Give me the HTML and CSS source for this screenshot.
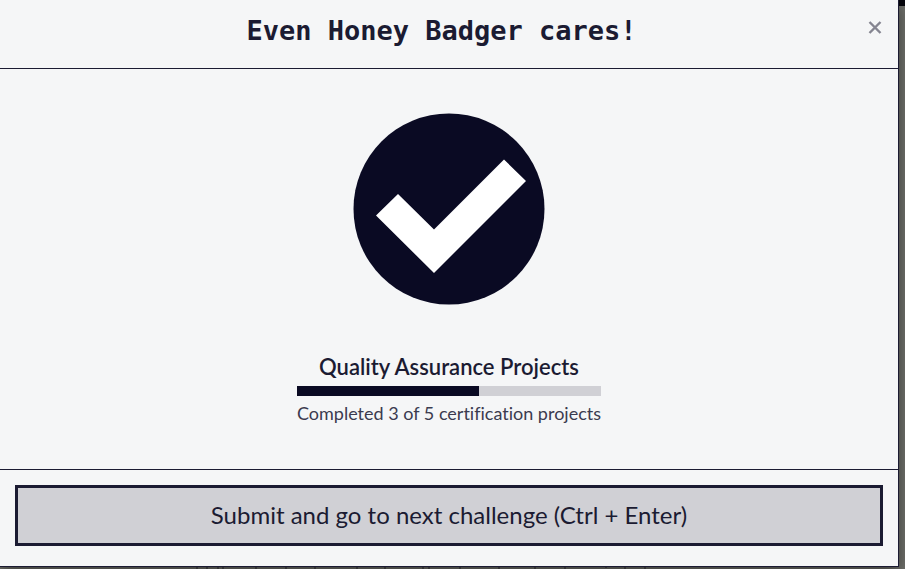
FILE: index.html
```html
<!DOCTYPE html>
<html lang="en">
<head>
<meta charset="utf-8">
<title>Even Honey Badger cares!</title>
<link rel="stylesheet" href="styles.css">
</head>
<body>
<div class="backdrop">
  <section class="modal" role="dialog" aria-labelledby="modal-title">
    <header class="modal-header">
      <h1 class="modal-title" id="modal-title">Even Honey Badger cares!</h1>
      <button class="close" type="button" aria-label="Close">
        <svg width="14" height="14" viewBox="0 0 14 14" aria-hidden="true"><path d="M1.500 1l11 11M12.500 1l-11 11" fill="none" stroke="#858591" stroke-width="2.400"/></svg>
      </button>
    </header>
    <main class="modal-body">
      <svg class="check" width="192" height="192" viewBox="0 0 192 192" aria-hidden="true">
        <circle cx="96" cy="96" r="95.500" fill="#0a0a23"/>
        <path d="M23 102.500L45 81l36 35.500L151 46.500L173 68L81 160z" fill="#fff"/>
      </svg>
      <div class="progress">
        <h2 class="progress-title">Quality Assurance Projects</h2>
        <div class="track" role="progressbar" aria-label="Certification progress" aria-valuemin="0" aria-valuemax="5" aria-valuenow="3"><div class="fill" style="width:60%"></div></div>
        <p class="progress-text">Completed 3 of 5 certification projects</p>
      </div>
    </main>
    <footer class="modal-footer">
      <button class="submit" type="button">Submit and go to next challenge (Ctrl + Enter)</button>
    </footer>
  </section>
  <svg class="behind" width="905" height="2" viewBox="0 0 905 2" aria-hidden="true">
    <path d="M197 0v2M207 0v2M218 0v2M223 0v2M256 0v2M286 0v2M315 0v2M357 0v2M385 0v2M423 0v2M429 0v2M460 0v2M499 0v2M535 0v2M565 0v2M606 0v1M625 0v2M645 0v2" stroke="#1c1c22" stroke-width="1"/>
  </svg>
</div>
</body>
</html>
```
FILE: styles.css
```css
* {
  box-sizing: border-box;
}

body {
  margin: 0;
  color: #1b1b32;
  font-family: Lato, sans-serif;
  overflow: hidden;
}

.backdrop {
  display: flex;
  flex-direction: column;
  height: 100vh;
  padding-right: 6px;
  background: linear-gradient(#05050c 6px, #71726d 6px);
}

.modal {
  flex: 1;
  display: flex;
  flex-direction: column;
  border: solid #1b1b32;
  border-width: 0 1px 1px 0;
  background: #f5f6f7;
  box-shadow: 0 5px 15px rgba(0, 0, 0, 0.5);
}

.modal-header {
  display: flex;
  align-items: flex-start;
  padding: 14px 16px 20px 15px;
  border-bottom: 1px solid #1b1b32;
}

.modal-title {
  flex: 1;
  margin: 0;
  font: bold 27px/34px "DejaVu Sans Mono", monospace;
  text-align: center;
}

.close {
  display: flex;
  margin: 0;
  padding: 7px 0;
  border: 0;
  background: none;
}

.modal-body {
  flex: 1;
  display: flex;
  flex-direction: column;
  align-items: center;
  padding-top: 44px;
}

.check {
  display: block;
}

.progress {
  margin-top: 48px;
  text-align: center;
}

.progress-title {
  margin: 0;
  font-size: 22px;
  font-weight: 600;
  line-height: 28px;
}

.track {
  height: 10px;
  margin-top: 5px;
  background: #d0d0d5;
}

.fill {
  height: 100%;
  background: #0a0a23;
}

.progress-text {
  margin: 5px 0 0;
  color: #3b3b4f;
  font-size: 18px;
  font-variant-ligatures: none;
  line-height: 24px;
}

.modal-footer {
  padding: 15px 15px 20px;
  border-top: 1px solid #1b1b32;
}

.submit {
  display: block;
  width: 100%;
  margin: 0;
  padding: 11px 12px 13px;
  border: 3px solid #1b1b32;
  border-radius: 0;
  background: #d0d0d5;
  color: #1b1b32;
  font: 24px/31px Lato, sans-serif;
}

.behind {
  display: block;
  position: relative;
}
```
